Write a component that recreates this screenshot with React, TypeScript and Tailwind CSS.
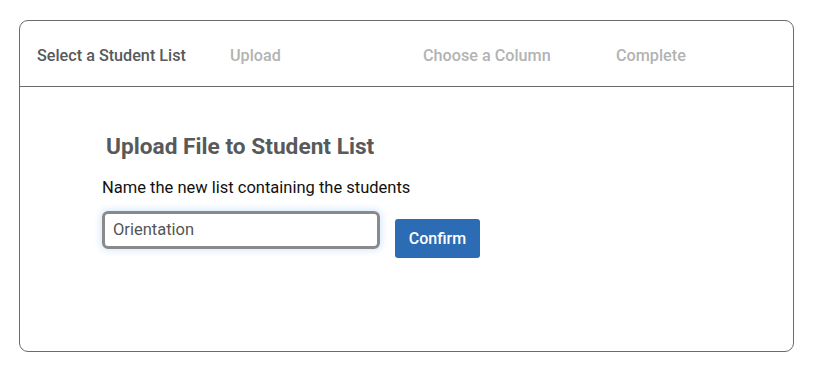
import React from "react";

export default function App() {
  const steps = ["Select a Student List", "Upload", "Choose a Column", "Complete"];
  return (
    <div className="w-[818px] h-[373px] bg-white pt-[20px] pl-[19px]" style={{ fontFamily: "Roboto, sans-serif" }}>
      <div className="w-[775px] h-[332px] border border-[#6b6b6b] rounded-[9px] flex flex-col">
        <div className="h-[66px] border-b border-[#6b6b6b] flex items-center pl-[17px] pt-[6px]">
          {steps.map((s, i) => (
            <div
              key={s}
              className={`w-[193px] shrink-0 text-[16.2px] font-medium ${i === 0 ? "text-[#58595b]" : "text-[#b3b3b3]"}`}
            >
              {s}
            </div>
          ))}
        </div>
        <div className="pl-[82px] pt-[45px] flex flex-col">
          <h2 className="text-[22.7px] font-bold text-[#58595b] pl-[4px] leading-[30px]">Upload File to Student List</h2>
          <p className="text-[16.5px] text-[#111111] mt-[15px] leading-[22px]">Name the new list containing the students</p>
          <div className="flex items-start mt-[12px]">
            <div className="w-[278px] h-[38px] border-[3px] border-[#8a8a8a] rounded-[6px] shadow-[0_0_6px_2px_rgba(147,197,253,0.35)] flex items-center pl-[8px] text-[16.5px] text-[#555555]">
              Orientation
            </div>
            <button className="ml-[15px] mt-[8px] w-[85px] h-[39px] bg-[#2b6cb5] rounded-[3px] text-white text-[16px] font-medium">
              Confirm
            </button>
          </div>
        </div>
      </div>
    </div>
  );
}
